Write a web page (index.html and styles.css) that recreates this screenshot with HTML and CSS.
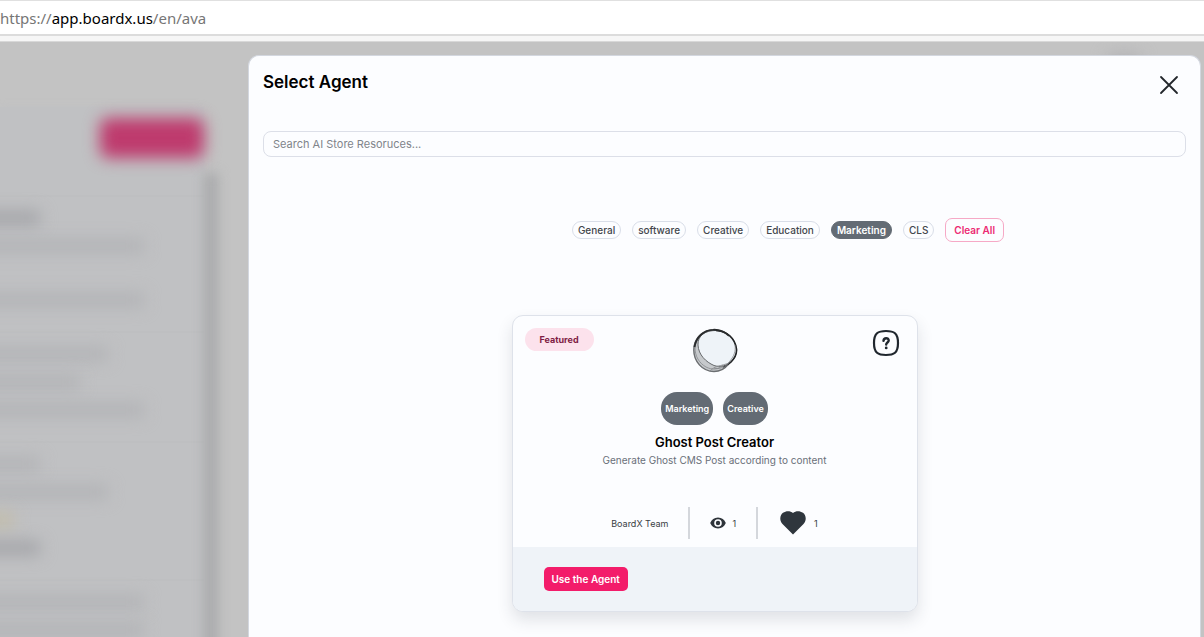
FILE: index.html
```html
<!DOCTYPE html>
<html lang="en">
<head>
<meta charset="utf-8">
<title>Select Agent</title>
<meta name="viewport" content="width=device-width, initial-scale=1">
<link rel="stylesheet" href="styles.css">
</head>
<body>
<header class="address-bar"><span class="muted">https://</span>app.boardx.us<span class="muted">/en/ava</span></header>
<div class="stage">
  <div class="backdrop" aria-hidden="true">
    <div class="topbar"><div class="smudge"></div></div>
    <div class="columns">
      <div class="sidebar">
        <div class="pink"></div>
        <div class="group"><div class="bar tiny dark"></div><div class="bar"></div><div class="bar apart"></div></div>
        <div class="group"><div class="bar mid"></div><div class="bar short"></div><div class="bar"></div></div>
        <div class="group"><div class="bar tiny"></div><div class="bar mid"></div><div class="bar yellow"></div><div class="bar tiny dark"></div></div>
        <div class="group"><div class="bar"></div><div class="bar"></div></div>
      </div>
      <div class="rail"></div>
    </div>
  </div>
  <main class="dialog" role="dialog" aria-labelledby="dialog-title">
    <div class="dialog-head">
      <h1 id="dialog-title">Select Agent</h1>
      <button class="close" type="button" aria-label="Close">
        <svg width="20" height="20" viewBox="0 0 20 20" fill="none" stroke="#22262b" stroke-width="1.8" stroke-linecap="round"><path d="M2 2l16 16M18 2L2 18"/></svg>
      </button>
    </div>
    <input class="search" type="search" aria-label="Search AI Store" placeholder="Search AI Store Resoruces...">
    <div class="filters">
      <button class="chip" type="button">General</button>
      <button class="chip" type="button">software</button>
      <button class="chip" type="button">Creative</button>
      <button class="chip" type="button">Education</button>
      <button class="chip selected" type="button" aria-pressed="true">Marketing</button>
      <button class="chip" type="button">CLS</button>
      <button class="clear" type="button">Clear All</button>
    </div>
    <div class="results">
      <article class="card">
        <div class="card-body">
          <div class="card-top">
            <div class="side"><span class="featured">Featured</span></div>
            <svg class="avatar" width="46" height="46" viewBox="0 0 46 46" fill="none">
              <path d="M22 2C10 2 1.500 11 1.500 22c0 12 9 21.500 20.500 21.500 7 0 12-4 17-8.500 4-5 5.500-9 5-15C43 9 34 2 22 2z" fill="#c6c9cc"/>
              <path d="M24 2.500C13 2 5.500 8 6 17c.5 10 8 17 16 20.500 6 2 13 .5 17-3.500 4-4 6-8 5.500-13C43 10 35 3 24 2.500z" fill="#eef3f8" stroke="#66696c" stroke-width="1"/>
              <path d="M31 39c3-1 5-2 8-5 4-4 6-8 5.500-13C43 10 35 3 24 2.500" stroke="#222426" stroke-width="1.600"/>
              <path d="M22 1.800C10 2 1.800 11 1.800 22S10 43.500 22 43.500c6 0 11-3 14-7" stroke="#6b6e71" stroke-width="1.400"/>
              <path d="M22 2.500C11 3 4 10 3 20c0 8 4 15 11 19 6 3 12 3 17-2M18 43c4-5 11-5 19-8M22 40c5 2 11-1 16-7 4-5 6-10 5-16" stroke="#85888b" stroke-width=".8"/>
              <path d="M2.500 19C4 9 12 2 21 1.800c6-.3 12 2 16 6.200" stroke="#292b2d" stroke-width="1.800"/>
            </svg>
            <div class="side end">
              <button class="help" type="button" aria-label="Help">
                <svg width="28" height="28" viewBox="0 0 28 28" fill="none" stroke="#20272e" stroke-linecap="round"><path d="M14 2C22 2 26 4 26 14S22 26 14 26 2 24 2 14 6 2 14 2z" stroke-width="2.200"/><path d="M11.500 11.800c.3-3.400 5.200-3.300 5.200-.3 0 2-2.500 2-2.500 4" stroke-width="2.400"/><circle cx="14.200" cy="18.900" r="1.400" fill="#20272e" stroke="none"/></svg>
              </button>
            </div>
          </div>
          <div class="tags"><span class="tag">Marketing</span><span class="tag">Creative</span></div>
          <h2>Ghost Post Creator</h2>
          <p>Generate Ghost CMS Post according to content</p>
          <div class="stats">
            <span class="stat author">BoardX Team</span>
            <span class="stat views"><svg width="16" height="12" viewBox="0 0 16 12"><path d="M8 .5C4.300.5 1.500 2.700.2 6c1.300 3.300 4.100 5.500 7.800 5.500s6.500-2.200 7.800-5.500C14.500 2.700 11.700.5 8 .5z" fill="#2e343a"/><circle cx="8" cy="6" r="3.800" fill="#fcfdff"/><circle cx="8" cy="6" r="2.200" fill="#2e343a"/></svg>1</span>
            <span class="stat likes"><svg width="26" height="24" viewBox="0 0 26 24"><path d="M13 23.500L2.500 13C-1 9 0 4 3 1.800 6.200-.5 10.500-.2 13 2c2.500-2.200 6.800-2.500 10-.2C26 4 27 9 23.500 13z" fill="#2f363d"/></svg>1</span>
          </div>
        </div>
        <div class="card-foot"><button class="use" type="button">Use the Agent</button></div>
      </article>
    </div>
  </main>
</div>
</body>
</html>
```
FILE: styles.css
```css
* { box-sizing: border-box; }
html, body { height: 100%; }
body {
  margin: 0;
  display: flex;
  flex-direction: column;
  overflow: hidden;
  background: #c3c3c3;
  font-family: Inter, "Liberation Sans", sans-serif;
}
button { font-family: inherit; cursor: pointer; }
.address-bar {
  flex: none;
  height: 42px;
  line-height: 34px;
  border-top: 1px solid #e0e0e0;
  border-bottom: 1px solid #d8d8d8;
  background: linear-gradient(#fff 33px, #dcdcdc 33px, #dcdcdc 35px, #f6f6f6 35px);
  color: #000;
  font-family: "Noto Sans", sans-serif;
  font-size: 15px;
}
.muted { color: #767676; }
.stage {
  position: relative;
  flex: 1;
  min-height: 0;
  display: flex;
  overflow: hidden;
}
.backdrop {
  position: absolute;
  inset: 0;
  overflow: hidden;
  background: #c3c3c3;
}
.topbar {
  height: 65px;
  display: flex;
  justify-content: flex-end;
  padding-right: 64px;
}
.smudge { width: 32px; height: 20px; margin-top: 12px; background: #b0b0b3; filter: blur(8px); }
.columns { display: flex; height: 100%; }
.sidebar {
  width: 204px;
  background: #c0c1c3;
  box-shadow: 0 0 8px #c0c1c3;
}
.pink {
  width: 104px;
  height: 40px;
  margin: 11px 0 37px auto;
  border-radius: 8px;
  background: #be3a6d;
  filter: blur(8px);
}
.group {
  display: flex;
  flex-direction: column;
  gap: 14px;
  margin-left: -20px;
  padding: 14px 0 24px;
  border-top: 2px solid #bebfc1;
}
.bar { width: 164px; height: 14px; background: #b2b3b6; filter: blur(8px); }
.bar.mid { width: 128px; }
.bar.short { width: 100px; }
.bar.tiny { width: 60px; }
.bar.dark { background: #a3a4a8; }
.bar.apart { margin-top: 26px; }
.bar.yellow { width: 34px; background: #c3bda9; }
.rail { width: 14px; margin-top: 66px; background: #a9aaac; filter: blur(6px); }
.dialog {
  position: relative;
  flex: 1;
  min-width: 0;
  margin: 13px 3px 0 248px;
  padding: 13px 14px 0;
  border: 1px solid #d3d7df;
  border-bottom: 0;
  border-radius: 11px 11px 0 0;
  background: #fcfdff;
}
.dialog-head { display: flex; justify-content: space-between; height: 62px; }
h1 { margin: 0; font-size: 17px; line-height: 26px; font-weight: 600; color: #000; }
.close { width: 32px; height: 32px; padding: 5px; border: 0; background: none; }
.close svg, .help svg { display: block; }
.search {
  display: block;
  width: 100%;
  height: 26px;
  padding: 0 9px;
  border: 1px solid #dcdfe8;
  border-radius: 8px;
  background: #fcfdff;
  font: 11px Inter, sans-serif;
}
.search::placeholder { color: #80848a; opacity: 1; }
.filters {
  display: flex;
  justify-content: center;
  align-items: center;
  gap: 11px;
  padding: 61px 0 73px 127px;
}
.chip {
  height: 18px;
  padding: 0 5px;
  border: 1px solid #d9dee8;
  border-radius: 9px;
  background: #fcfdff;
  color: #42464b;
  font-size: 10px;
  line-height: 16px;
  font-weight: 500;
}
.chip.selected { border-color: #636b74; background: #636b74; color: #fff; font-weight: 600; }
.clear {
  height: 24px;
  padding: 0 8px;
  border: 1px solid #f6a9c6;
  border-radius: 7px;
  background: #fcfdff;
  color: #ec2a73;
  font-size: 10px;
  font-weight: 600;
}
.results { display: flex; justify-content: center; padding-right: 20px; }
.card {
  width: 406px;
  border: 1px solid #dee2ea;
  border-radius: 11px;
  overflow: hidden;
  background: #fcfdff;
  box-shadow: 0 8px 16px rgba(40, 45, 60, .13);
}
.card-body { padding: 12px 12px 8px; text-align: center; }
.card-top { display: flex; height: 64px; }
.side { flex: 1; display: flex; align-items: flex-start; }
.side.end { justify-content: flex-end; }
.featured {
  padding: 0 15px;
  border-radius: 12px;
  background: #fce2ec;
  color: #7f1d45;
  font-size: 9px;
  line-height: 23px;
  font-weight: 700;
}
.help { margin: 1px 5px 0 0; padding: 0; border: 0; background: none; }
.tags { display: flex; justify-content: center; gap: 10px; }
.tag {
  padding: 0 4px;
  border-radius: 16px;
  background: #636b74;
  color: #fff;
  font-size: 9px;
  line-height: 33px;
  font-weight: 600;
}
h2 { margin: 8px 0 0; font-size: 13px; line-height: 18px; font-weight: 600; color: #000; }
p { margin: 1px 0 0; font-size: 10px; line-height: 16px; color: #6a7079; }
.stats { display: flex; justify-content: center; margin-top: 39px; }
.stat { display: flex; align-items: center; height: 32px; font-size: 9px; color: #3a3e44; }
.author { padding-right: 20px; }
.views { gap: 6px; padding: 0 20px; border: solid #d4d7dc; border-width: 0 2px; }
.likes { gap: 8px; padding-left: 22px; }
.card-foot { padding: 20px 31px; background: #eff3f8; }
.use {
  display: block;
  height: 24px;
  padding: 0 8px;
  border: 0;
  border-radius: 5px;
  background: #f31c6a;
  color: #fff;
  font-size: 10px;
  font-weight: 600;
}
```
